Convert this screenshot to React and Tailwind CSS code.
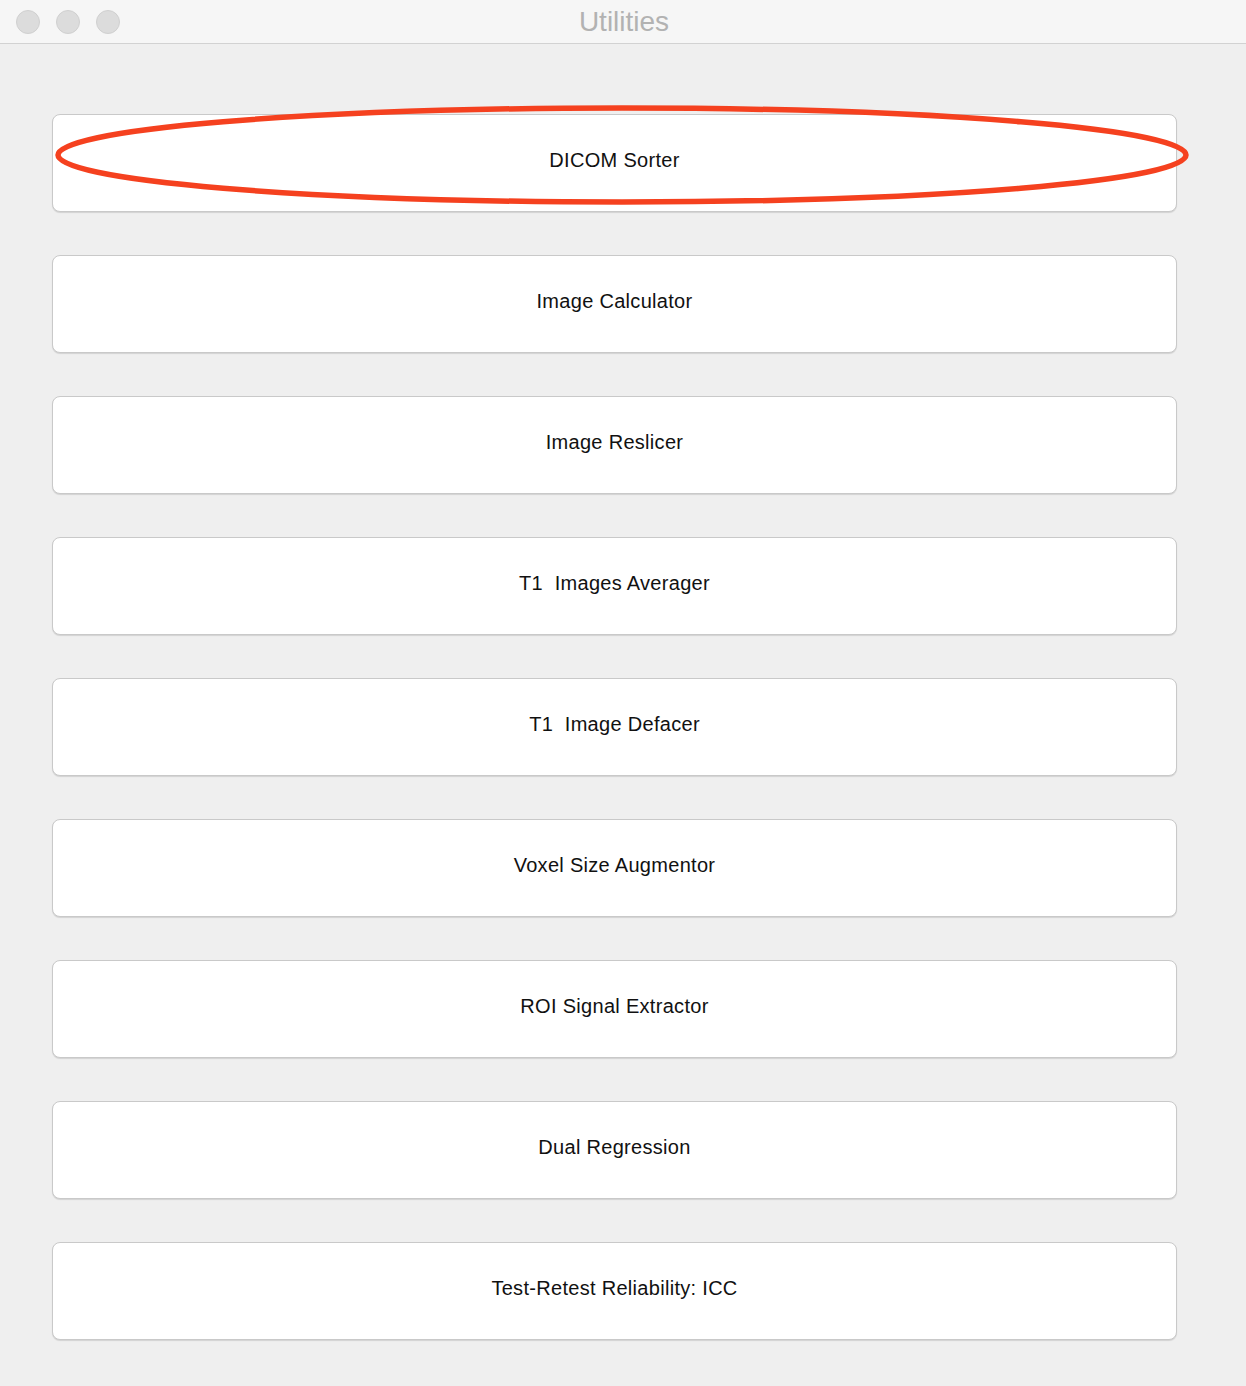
import React from 'react';

const tools = [
    'DICOM Sorter',
    'Image Calculator',
    'Image Reslicer',
    'T1  Images Averager',
    'T1  Image Defacer',
    'Voxel Size Augmentor',
    'ROI Signal Extractor',
    'Dual Regression',
    'Test-Retest Reliability: ICC',
];

const App = () => {
    return (
        <div className="w-[1246px] h-[1386px] bg-[#efefef] flex flex-col overflow-hidden" style={{ fontFamily: '"Liberation Sans", Arial, sans-serif' }}>
            {/* title bar */}
            <div className="relative h-[44px] bg-[#f6f6f6] border-b border-[#d2d2d2] flex items-center justify-center shrink-0">
                <div className="absolute left-[16px] top-[10px] flex gap-[16px]">
                    <span className="w-[24px] h-[24px] rounded-full bg-[#dcdcdc] border border-[#d0d0d0]" />
                    <span className="w-[24px] h-[24px] rounded-full bg-[#dcdcdc] border border-[#d0d0d0]" />
                    <span className="w-[24px] h-[24px] rounded-full bg-[#dcdcdc] border border-[#d0d0d0]" />
                </div>
                <span className="text-[28px] text-[#b2b2b2] ml-[2px]">Utilities</span>
            </div>

            <div className="relative flex flex-col gap-[43.5px] pl-[52px] pr-[69px] pt-[70px]">
                {tools.map((name) => (
                    <button
                        key={name}
                        className="h-[97.5px] w-full bg-white rounded-[8px] border border-[#c9c9c9] shadow-[0_1px_1px_rgba(0,0,0,0.12)] flex items-center justify-center pb-[6px] text-[20px] tracking-[0.3px] text-[#111] whitespace-pre"
                    >
                        {name}
                    </button>
                ))}

                {/* highlight ring */}
                <svg className="absolute left-[54px] top-[60px] pointer-events-none" width="1140" height="104" viewBox="0 0 1140 104">
                    <ellipse cx="568" cy="51" rx="564" ry="47" fill="none" stroke="#f5411f" strokeWidth="5.5" />
                </svg>
            </div>
        </div>
    );
};

export default App;
